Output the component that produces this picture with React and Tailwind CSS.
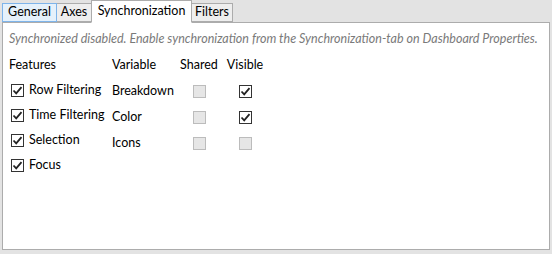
import React from 'react';

const Check = ({ checked, disabled }) => (
  <span
    className={`flex h-[13px] w-[13px] shrink-0 items-center justify-center border ${
      disabled ? 'border-[#bcbcbc] bg-[#e6e6e6]' : 'border-[#333333] bg-white'
    }`}
  >
    {checked && (
      <svg width="11" height="11" viewBox="0 0 11 11">
        <path d="M1.5 5.5 L4.2 8.3 L9.5 2.2" stroke="#222" strokeWidth="1.8" fill="none" />
      </svg>
    )}
  </span>
);

const tabs = [
  { label: 'General', w: 'w-[55px]', cls: 'h-[19px] border-[#7eb4ea] bg-[#e5f1fb] z-[1]' },
  { label: 'Axes', w: 'w-[36px]', cls: 'h-[19px] -ml-px border-[#acacac] bg-[#eeeeee]' },
  { label: 'Synchronization', w: 'w-[101px]', cls: 'h-[23px] -ml-px border-[#acacac] border-b-white bg-white z-10 -mb-px' },
  { label: 'Filters', w: 'w-[42px]', cls: 'h-[19px] -ml-px border-[#acacac] bg-[#eeeeee]' },
];

const features = ['Row Filtering', 'Time Filtering', 'Selection', 'Focus'];

const variables = [
  { name: 'Breakdown', visible: true, visibleDisabled: false },
  { name: 'Color', visible: true, visibleDisabled: false },
  { name: 'Icons', visible: false, visibleDisabled: true },
];

export default function App() {
  return (
    <div
      className="h-[254px] w-[552px] bg-[#e3e3e3] text-[12.5px] text-black"
      style={{ fontFamily: 'Lato, "Noto Sans", sans-serif' }}
    >
      <div className="flex h-[22px] items-end pl-[2px]">
        {tabs.map((t) => (
          <div
            key={t.label}
            className={`relative flex items-center justify-center border leading-none ${t.w} ${t.cls}`}
          >
            {t.label}
          </div>
        ))}
      </div>

      <div className="ml-[2px] h-[228px] w-[548px] border border-[#acacac] bg-white px-[6px] pt-[8px]">
        <div className="h-[16px] whitespace-nowrap leading-[16px] italic text-[#7a7a7a]">
          Synchronized disabled. Enable synchronization from the Synchronization-tab on Dashboard Properties.
        </div>

        <div className="mt-[10px] flex">
          <div className="w-[103px]">
            <div className="h-[16px] leading-[16px]">Features</div>
            <div className="mt-[5px]">
              {features.map((f) => (
                <div key={f} className="flex h-[25px] items-center gap-[5px] pl-[2px]">
                  <Check checked />
                  <span>{f}</span>
                </div>
              ))}
            </div>
          </div>

          <div>
            <div className="grid h-[16px] grid-cols-[64px_46px_46px] leading-[16px]">
              <span>Variable</span>
              <span className="text-center">Shared</span>
              <span className="text-center">Visible</span>
            </div>
            <div className="mt-[5px]">
              {variables.map((v) => (
                <div key={v.name} className="grid h-[26px] grid-cols-[64px_46px_46px] items-center">
                  <span>{v.name}</span>
                  <span className="flex justify-center">
                    <Check disabled />
                  </span>
                  <span className="flex justify-center">
                    <Check checked={v.visible} disabled={v.visibleDisabled} />
                  </span>
                </div>
              ))}
            </div>
          </div>
        </div>
      </div>
    </div>
  );
}
